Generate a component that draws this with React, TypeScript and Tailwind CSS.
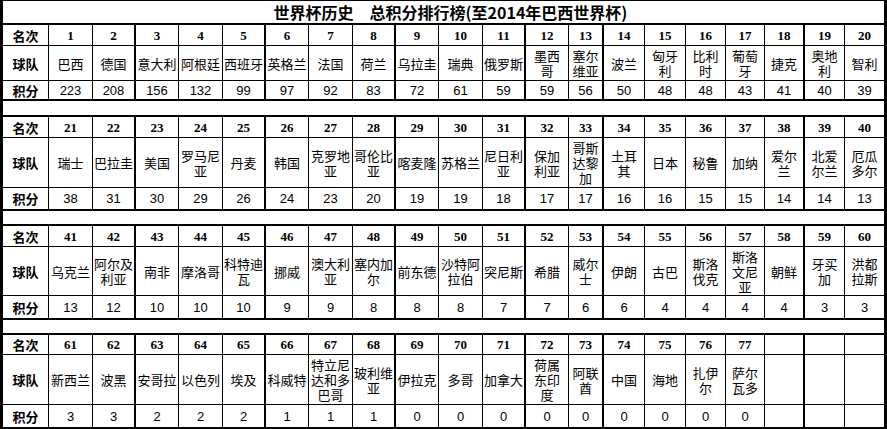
import React from 'react';

type Team = [number, string, number];

const GRID =
  'grid grid-cols-[46px_44px_43px_43px_44px_43px_43px_44px_43px_43px_44px_43px_43px_35px_41px_41px_40px_39px_40px_40px_39px]';

// columns whose right-hand rule is drawn heavier in the sheet
const THICK = [2, 5, 8, 11, 13, 18];

const CJK = "font-['Noto_Sans_CJK_SC',sans-serif]";

const blocks: { header: string; team: string; score: string; edge: string; rows: Team[] }[] = [
  {
    header: 'h-[21px]',
    team: 'h-[35px]',
    score: 'h-[18px]',
    edge: 'border-b-2',
    rows: [
      [1, '巴西', 223], [2, '德国', 208], [3, '意大利', 156], [4, '阿根廷', 132], [5, '西班牙', 99],
      [6, '英格兰', 97], [7, '法国', 92], [8, '荷兰', 83], [9, '乌拉圭', 72], [10, '瑞典', 61],
      [11, '俄罗斯', 59], [12, '墨西/哥', 59], [13, '塞尔/维亚', 56], [14, '波兰', 50], [15, '匈牙/利', 48],
      [16, '比利/时', 48], [17, '葡萄/牙', 43], [18, '捷克', 41], [19, '奥地/利', 40], [20, '智利', 39],
    ],
  },
  {
    header: 'h-[21px]',
    team: 'h-[50px]',
    score: 'h-[21px]',
    edge: 'border-y-2',
    rows: [
      [21, '瑞士', 38], [22, '巴拉圭', 31], [23, '美国', 30], [24, '罗马尼/亚', 29], [25, '丹麦', 26],
      [26, '韩国', 24], [27, '克罗地/亚', 23], [28, '哥伦比/亚', 20], [29, '喀麦隆', 19], [30, '苏格兰', 19],
      [31, '尼日利/亚', 18], [32, '保加/利亚', 17], [33, '哥斯/达黎/加', 17], [34, '土耳/其', 16], [35, '日本', 16],
      [36, '秘鲁', 15], [37, '加纳', 15], [38, '爱尔/兰', 14], [39, '北爱/尔兰', 14], [40, '厄瓜/多尔', 13],
    ],
  },
  {
    header: 'h-[21px]',
    team: 'h-[49px]',
    score: 'h-[22px]',
    edge: 'border-y-2',
    rows: [
      [41, '乌克兰', 13], [42, '阿尔及/利亚', 12], [43, '南非', 10], [44, '摩洛哥', 10], [45, '科特迪/瓦', 10],
      [46, '挪威', 9], [47, '澳大利/亚', 9], [48, '塞内加/尔', 8], [49, '前东德', 8], [50, '沙特阿/拉伯', 8],
      [51, '突尼斯', 7], [52, '希腊', 7], [53, '威尔/士', 6], [54, '伊朗', 6], [55, '古巴', 4],
      [56, '斯洛/伐克', 4], [57, '斯洛/文尼/亚', 4], [58, '朝鲜', 4], [59, '牙买/加', 3], [60, '洪都/拉斯', 3],
    ],
  },
  {
    header: 'h-[20px]',
    team: 'h-[50px]',
    score: 'h-[22px]',
    edge: 'border-y-2',
    rows: [
      [61, '新西兰', 3], [62, '波黑', 3], [63, '安哥拉', 2], [64, '以色列', 2], [65, '埃及', 2],
      [66, '科威特', 1], [67, '特立尼/达和多/巴哥', 1], [68, '玻利维/亚', 1], [69, '伊拉克', 0], [70, '多哥', 0],
      [71, '加拿大', 0], [72, '荷属/东印/度', 0], [73, '阿联/酋', 0], [74, '中国', 0], [75, '海地', 0],
      [76, '扎伊/尔', 0], [77, '萨尔/瓦多', 0],
    ],
  },
];

function rule(col: number) {
  if (col === 20) return '';
  if (THICK.includes(col)) return 'border-r-2';
  return 'border-r';
}

const Cell = ({ col, h, last, children }: { col: number; h: string; last?: boolean; children?: React.ReactNode }) => (
  <div
    className={`${h} ${rule(col)} ${last ? '' : 'border-b'} border-black flex flex-col items-center justify-center text-center overflow-hidden`}
  >
    {children}
  </div>
);

const Block = ({ b }: { b: (typeof blocks)[number] }) => {
  const cols = Array.from({ length: 20 }, (_, i) => b.rows[i]);
  return (
    <div className={`${GRID} ${b.edge} border-black`}>
      <Cell col={0} h={b.header}>
        <span className={`${CJK} text-[13px] font-bold leading-none`}>名次</span>
      </Cell>
      {cols.map((t, i) => (
        <Cell key={`n${i}`} col={i + 1} h={b.header}>
          {t && <span className="font-['Liberation_Serif',serif] text-[13px] font-bold leading-none">{t[0]}</span>}
        </Cell>
      ))}

      <Cell col={0} h={b.team}>
        <span className={`${CJK} text-[13px] font-bold leading-none`}>球队</span>
      </Cell>
      {cols.map((t, i) => (
        <Cell key={`t${i}`} col={i + 1} h={b.team}>
          {t && (
            <span className={`${CJK} block text-[13px] leading-[15px] whitespace-pre-line`}>
              {t[1].split('/').join('\n')}
            </span>
          )}
        </Cell>
      ))}

      <Cell col={0} h={b.score} last>
        <span className={`${CJK} text-[13px] font-bold leading-none`}>积分</span>
      </Cell>
      {cols.map((t, i) => (
        <Cell key={`s${i}`} col={i + 1} h={b.score} last>
          {t && <span className="font-['Liberation_Sans',sans-serif] text-[13px] leading-none">{t[2]}</span>}
        </Cell>
      ))}
    </div>
  );
};

export default function App() {
  return (
    <div className="w-[887px] h-[429px] bg-white text-black border-x-[3px] border-black overflow-hidden">
      <div className="h-[25px] border-t border-b-2 border-black flex items-center justify-center pl-[14px]">
        <span className={`${CJK} text-[16px] font-bold leading-none whitespace-pre`}>
          世界杯历史　总积分排行榜(至2014年巴西世界杯)
        </span>
      </div>

      <Block b={blocks[0]} />
      <div className="h-[14px]" />
      <Block b={blocks[1]} />
      <div className="h-[13px]" />
      <Block b={blocks[2]} />
      <div className="h-[13px]" />
      <Block b={blocks[3]} />
    </div>
  );
}
